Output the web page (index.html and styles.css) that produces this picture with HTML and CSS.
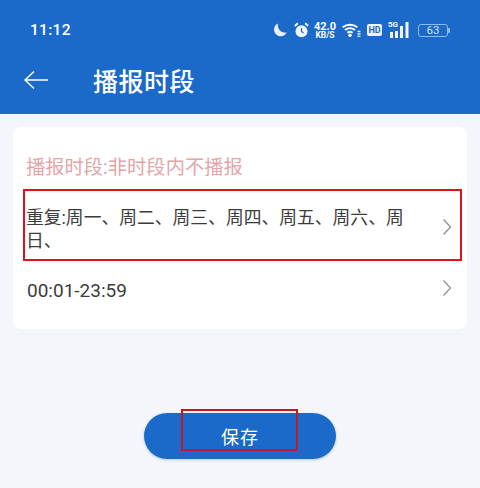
FILE: index.html
```html
<!DOCTYPE html>
<html lang="zh-CN">

<head>
    <meta charset="UTF-8">
    <meta name="viewport" content="width=device-width, initial-scale=1.0">
    <title>播报时段</title>
    <link rel="stylesheet" href="styles.css">
</head>

<body>
    <header class="header">
        <div class="status">
            <span class="time">11:12</span>
            <div class="status-icons">
                <svg class="icon-moon" width="14" height="14" viewBox="0 0 14 14"><path d="M5 .5A6.700 6.700 0 1 0 13.800 9.500 7.500 7.500 0 0 1 5 .5z" fill="#e8f0fb"/></svg>
                <svg class="icon-alarm" width="15" height="16" viewBox="0 0 15 16"><circle cx="7.500" cy="9.300" r="6" fill="#f2f6fc"/><path d="M7.500 6v3.500l2 1.500" fill="none" stroke="#1b69c9" stroke-width="1.200"/><path d="M.8 4L3.800 1.200M14.200 4L11.200 1.200" stroke="#f2f6fc" stroke-width="2"/></svg>
                <div class="speed"><span class="speed-num">42.0</span><span class="speed-unit">KB/S</span></div>
                <svg class="icon-wifi" width="19" height="14" viewBox="0 0 19 14"><path d="M.7 4.300a11.500 11.500 0 0 1 14.600 0M3 7a8 8 0 0 1 10 0M5.400 9.700a4.200 4.200 0 0 1 5.200 0" fill="none" stroke="#fff" stroke-width="1.900"/><circle cx="8" cy="12.300" r="1.700" fill="#fff"/><path d="M15.500 8.500h3M15.500 11h3M15.500 13.300h3" stroke="#e8f0fb" stroke-width="1.300"/></svg>
                <span class="hd">HD</span>
                <div class="signal">
                    <span class="five-g">5G</span>
                    <svg class="bars" width="20" height="16" viewBox="0 0 20 16"><path d="M1 10h3v6H1zM6 9h3v7H6zM11 4h3v12h-3zM16.500 0h3v16h-3z" fill="#f2f6fc"/></svg>
                </div>
                <span class="battery">63</span>
            </div>
        </div>
        <div class="titlebar">
            <svg class="back" width="26" height="20" viewBox="0 0 26 20"><path d="M25 10H2M11 1.500L2 10l9 8.500" fill="none" stroke="#fff" stroke-width="1.500"/></svg>
            <h1 class="title">播报时段</h1>
        </div>
    </header>

    <main class="content">
        <section class="card">
            <p class="hint">播报时段:非时段内不播报</p>
            <div class="row row-repeat">
                <span class="row-text">重复:周一、周二、周三、周四、周五、周六、周日、</span>
                <svg class="chevron" width="10" height="18" viewBox="0 0 10 18"><path d="M1.500 1.500l7 7.500-7 7.500" fill="none" stroke="#9a9a9a" stroke-width="1.500"/></svg>
            </div>
            <div class="row row-time">
                <span class="row-text">00:01-23:59</span>
                <svg class="chevron" width="10" height="18" viewBox="0 0 10 18"><path d="M1.500 1.500l7 7.500-7 7.500" fill="none" stroke="#9a9a9a" stroke-width="1.500"/></svg>
            </div>
        </section>

        <div class="save-wrap">
            <button class="save" type="button">保存</button>
            <span class="mark"></span>
        </div>
    </main>
</body>

</html>
```

FILE: styles.css
```css
* {
    box-sizing: border-box;
}

html,
body {
    height: 100%;
}

body {
    margin: 0;
    background: #f4f6fb;
    font-family: Roboto, "Noto Sans CJK SC", sans-serif;
    overflow: hidden;
}

.header {
    height: 114px;
    background: #1b69c9;
    color: #fff;
}

.status {
    display: flex;
    align-items: center;
    justify-content: space-between;
    height: 45px;
    padding: 15px 32px 0 30px;
}

.time {
    font-size: 15.5px;
    font-weight: 500;
    letter-spacing: 0.3px;
}

.status-icons {
    display: flex;
    align-items: center;
}

.icon-moon {
    margin-right: 7px;
}

.icon-alarm {
    margin-right: 5px;
}

.speed {
    display: flex;
    flex-direction: column;
    align-items: center;
    gap: 1px;
    width: 22px;
    margin-right: 6px;
    font-weight: 700;
    line-height: 1;
}

.speed-num {
    font-size: 11px;
    line-height: 9px;
}

.speed-unit {
    font-size: 8.5px;
    line-height: 7px;
}

.icon-wifi {
    margin-right: 6px;
}

.hd {
    width: 15px;
    height: 12px;
    margin-right: 7px;
    border-radius: 2px;
    background: #f2f6fc;
    color: #1b69c9;
    font-size: 9px;
    font-weight: 700;
    line-height: 12px;
    text-align: center;
}

.signal {
    position: relative;
    width: 21px;
    height: 16px;
    margin-right: 8px;
}

.bars {
    display: block;
}

.five-g {
    position: absolute;
    top: -2px;
    left: -1px;
    font-size: 8px;
    font-weight: 700;
    line-height: 9px;
}

.battery {
    position: relative;
    width: 30px;
    height: 13px;
    border: 1px solid #8fbcf0;
    border-radius: 3px;
    color: #cfe1f8;
    font-size: 11.5px;
    line-height: 11px;
    text-align: center;
}

.battery::after {
    content: "";
    position: absolute;
    top: 3px;
    right: -3px;
    width: 2px;
    height: 5px;
    border-radius: 0 1px 1px 0;
    background: #8fbcf0;
}

.titlebar {
    display: flex;
    align-items: center;
    height: 69px;
    padding-left: 23px;
}

.back {
    margin-right: 44px;
}

.title {
    margin: 0;
    font-size: 25px;
    font-weight: 500;
    letter-spacing: 0.5px;
}

.content {
    padding: 13px 13px 0;
}

.card {
    height: 202px;
    padding-top: 26px;
    border-radius: 8px;
    background: #fff;
}

.hint {
    height: 36px;
    margin: 0 0 0 13px;
    color: #e3a5a8;
    font-size: 19.3px;
    line-height: 30px;
}

.row {
    display: flex;
    align-items: center;
    justify-content: space-between;
}

.row-repeat {
    height: 72px;
    margin: 0 5px 0 10px;
    padding: 0 8px 0 1px;
    border: 2px solid #e0101c;
}

.row-time {
    height: 56px;
    padding: 0 15px 0 14px;
}

.row-text {
    color: #3c3c3c;
    font-size: 17.8px;
    line-height: 23px;
}

.row-repeat .row-text {
    width: 385px;
    margin-top: 8px;
}

.row-repeat .chevron {
    margin-top: 3px;
}

.row-time .row-text {
    margin-top: 2px;
    font-size: 19px;
}

.row-time .chevron {
    margin-bottom: 2px;
}

.save-wrap {
    position: relative;
    width: 192px;
    margin: 84px auto 0;
}

.save {
    display: block;
    width: 192px;
    height: 46px;
    padding: 0;
    border: 0;
    border-radius: 23px;
    background: #1b69c9;
    color: #fff;
    font-family: inherit;
    font-size: 18px;
    letter-spacing: 1px;
    box-shadow: 0 1px 3px rgba(27, 105, 201, 0.3);
}

.mark {
    position: absolute;
    top: -4px;
    left: 37px;
    width: 117px;
    height: 42px;
    border: 2px solid #c0182a;
}
```
